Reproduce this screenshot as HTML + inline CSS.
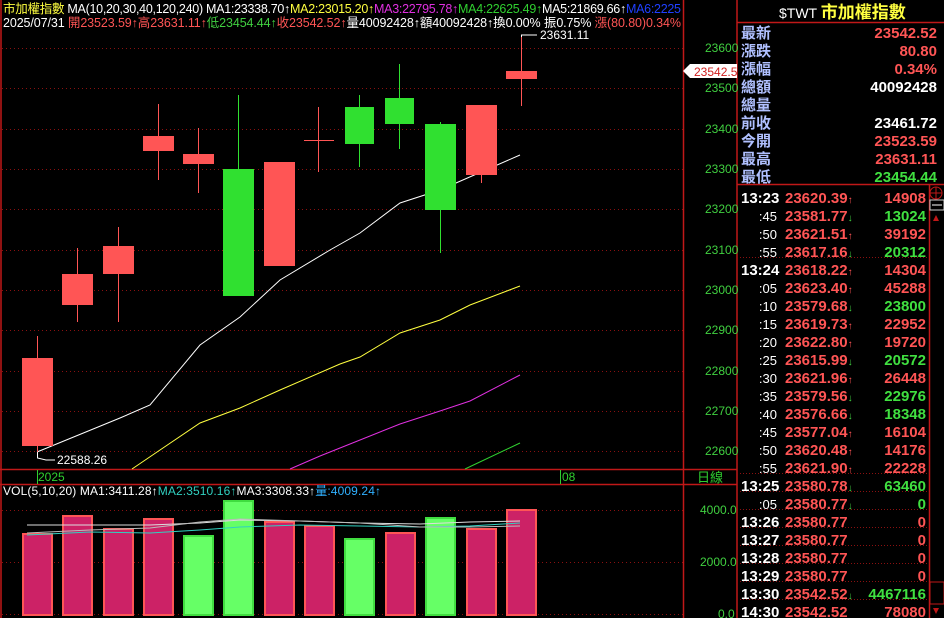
<!DOCTYPE html>
<html><head><meta charset="utf-8"><style>
html,body{margin:0;padding:0;background:#000;width:944px;height:618px;overflow:hidden}
svg{display:block;font-family:"Liberation Sans","Noto Sans CJK TC",sans-serif}
</style></head><body>
<svg width="944" height="618" xmlns="http://www.w3.org/2000/svg" font-size="12">
<rect width="944" height="618" fill="#000"/>
<g stroke="#8a1010" stroke-dasharray="1,3" stroke-width="1">
<line x1="2" x2="683" y1="48.5" y2="48.5"/><line x1="2" x2="683" y1="88.5" y2="88.5"/>
<line x1="2" x2="683" y1="129.5" y2="129.5"/><line x1="2" x2="683" y1="169.5" y2="169.5"/>
<line x1="2" x2="683" y1="209.5" y2="209.5"/><line x1="2" x2="683" y1="250.5" y2="250.5"/>
<line x1="2" x2="683" y1="290.5" y2="290.5"/><line x1="2" x2="683" y1="330.5" y2="330.5"/>
<line x1="2" x2="683" y1="371.5" y2="371.5"/><line x1="2" x2="683" y1="411.5" y2="411.5"/>
<line x1="2" x2="683" y1="451.5" y2="451.5"/>
<line x1="2" x2="683" y1="510.5" y2="510.5"/><line x1="2" x2="683" y1="562.5" y2="562.5"/>
<line x1="2" x2="683" y1="614.5" y2="614.5"/>
</g>
<g stroke="#c01818" stroke-width="1.5" fill="none">
<line x1="1" y1="0" x2="1" y2="618"/>
<line x1="0" y1="469.5" x2="737" y2="469.5"/>
<line x1="0" y1="484.5" x2="737" y2="484.5"/>
<line x1="683.5" y1="0" x2="683.5" y2="618"/>
<line x1="737" y1="0" x2="737" y2="618"/>
<line x1="737" y1="22.5" x2="944" y2="22.5"/>
<line x1="737" y1="184.5" x2="944" y2="184.5"/>
<line x1="929.5" y1="185" x2="929.5" y2="618"/>
</g>
<polyline fill="none" stroke="#fff" stroke-width="1" points="37,452 120,418 150,405 200,345 240,317 280,280 330,250 360,233 400,203 440,190 520,155"/>
<polyline fill="none" stroke="#ffff40" stroke-width="1" points="132,469 160,450 200,423 240,408 280,390 340,364 360,357 400,333 440,320 470,305 520,286"/>
<polyline fill="none" stroke="#e030e0" stroke-width="1" points="290,469 320,456 360,440 400,424 440,411 470,401 520,375"/>
<polyline fill="none" stroke="#30d030" stroke-width="1" points="465,469 520,443"/>
<g fill="#ff5555" stroke="#ff5555">
<line x1="37.5" y1="336" x2="37.5" y2="458"/><rect x="22" y="358" width="31" height="88" stroke="none"/>
<line x1="77.5" y1="248" x2="77.5" y2="322"/><rect x="62" y="274" width="31" height="31" stroke="none"/>
<line x1="118.5" y1="227" x2="118.5" y2="322"/><rect x="103" y="246" width="31" height="28" stroke="none"/>
<line x1="158.5" y1="104" x2="158.5" y2="180"/><rect x="143" y="136" width="31" height="15" stroke="none"/>
<line x1="198.5" y1="128" x2="198.5" y2="193"/><rect x="183" y="154" width="31" height="10" stroke="none"/>
<rect x="264" y="162" width="31" height="104" stroke="none"/>
<line x1="318.5" y1="107" x2="318.5" y2="172"/><line x1="304" y1="140.5" x2="334" y2="140.5"/>
<line x1="481.5" y1="105" x2="481.5" y2="183"/><rect x="466" y="105" width="31" height="70" stroke="none"/>
<line x1="521.5" y1="37" x2="521.5" y2="106"/><rect x="506" y="71" width="31" height="8" stroke="none"/>
</g>
<g fill="#30e030" stroke="#30e030">
<line x1="238.5" y1="95" x2="238.5" y2="296"/><rect x="223" y="169" width="31" height="127" stroke="none"/>
<line x1="359.5" y1="95" x2="359.5" y2="167"/><rect x="345" y="107" width="29" height="37" stroke="none"/>
<line x1="399.5" y1="64" x2="399.5" y2="149"/><rect x="385" y="98" width="29" height="26" stroke="none"/>
<line x1="440.5" y1="122" x2="440.5" y2="253"/><rect x="425" y="124" width="31" height="86" stroke="none"/>
</g>
<polyline fill="none" stroke="#fff" points="521.5,37 521.5,35 537,35"/>
<text x="540" y="39" fill="#fff">23631.11</text>
<polyline fill="none" stroke="#fff" points="37.5,452 37.5,458 46,460 55,460"/>
<text x="57" y="464" fill="#fff">22588.26</text>
<text x="38" y="481" fill="#30d030">2025</text>
<line x1="37.5" y1="470" x2="37.5" y2="484" stroke="#30d030"/>
<text x="562" y="481" fill="#30d030">08</text>
<line x1="560.5" y1="470" x2="560.5" y2="484" stroke="#30d030"/>
<text x="697" y="482" fill="#30d030" font-size="13">日線</text>
<g fill="#cc2266" stroke="#ff5555" stroke-width="2">
<rect x="23" y="534" width="29" height="81"/><rect x="63" y="516" width="29" height="99"/>
<rect x="104" y="529" width="29" height="86"/><rect x="144" y="519" width="29" height="96"/>
<rect x="265" y="522" width="29" height="93"/><rect x="305" y="526" width="29" height="89"/>
<rect x="386" y="533" width="29" height="82"/><rect x="467" y="529" width="29" height="86"/>
<rect x="507" y="510" width="29" height="105"/>
</g>
<g fill="#66ff66" stroke="#40dd40" stroke-width="2">
<rect x="184" y="536" width="29" height="79"/><rect x="224" y="501" width="29" height="114"/>
<rect x="345" y="539" width="29" height="76"/><rect x="426" y="518" width="29" height="97"/>
</g>
<polyline fill="none" stroke="#ddd" points="27,525 150,525 200,523 240,520 300,521 360,523 420,524 470,522 520,521"/>
<polyline fill="none" stroke="#30d0c0" points="27,535 90,532 150,533 200,530 240,527 300,525 360,526 420,527 470,526 520,523"/>
<polyline fill="none" stroke="#bbb" points="27,533 90,530 150,528 200,522 240,519 300,521 360,523 420,527 470,527 520,526"/>
<g fill="#40d040" font-size="12">
<text x="705" y="52">23600</text><text x="705" y="92">23500</text>
<text x="705" y="133">23400</text><text x="705" y="173">23300</text>
<text x="705" y="213">23200</text><text x="705" y="254">23100</text>
<text x="705" y="294">23000</text><text x="705" y="334">22900</text>
<text x="705" y="375">22800</text><text x="705" y="415">22700</text>
<text x="705" y="455">22600</text>
<text x="700" y="514">4000.0</text><text x="700" y="566">2000.0</text><text x="718" y="618">0.0</text>
</g>
<polygon points="683,71 690,64 737,64 737,78 690,78" fill="#fff"/>
<text x="694" y="76" fill="#d02020">23542.5</text>
<text x="3" y="13" font-size="12.5" fill="#fff" textLength="678" lengthAdjust="spacing"><tspan fill="#ffff40">市加權指數</tspan> MA(10,20,30,40,120,240) MA1:23338.70↑<tspan fill="#ffff40">MA2:23015.20↑</tspan><tspan fill="#e030e0">MA3:22795.78↑</tspan><tspan fill="#30d030">MA4:22625.49↑</tspan>MA5:21869.66↑<tspan fill="#2040ff">MA6:2225</tspan></text>
<text x="3" y="27" font-size="12.5" fill="#fff" textLength="678" lengthAdjust="spacing">2025/07/31 <tspan fill="#ff5555">開23523.59↑高23631.11↑</tspan><tspan fill="#40d040">低23454.44↑</tspan><tspan fill="#ff5555">收23542.52↑</tspan>量40092428↑額40092428↑換0.00% 振0.75% <tspan fill="#ff5555">漲(80.80)0.34%</tspan></text>
<text x="3" y="495" fill="#fff" font-size="12" textLength="378" lengthAdjust="spacing">VOL(5,10,20) MA1:3411.28↑<tspan fill="#30d0c0">MA2:3510.16↑</tspan>MA3:3308.33↑<tspan fill="#30b0ff">量:4009.24↑</tspan></text>
<text x="779" y="18" fill="#fff" font-size="14">$TWT <tspan fill="#ffff40" font-size="17" font-weight="bold">市加權指數</tspan></text>
<g font-size="15" fill="#b0c0ff" font-weight="bold">
<text x="741" y="38">最新</text><text x="741" y="56">漲跌</text><text x="741" y="74">漲幅</text>
<text x="741" y="92">總額</text><text x="741" y="110">總量</text><text x="741" y="128">前收</text>
<text x="741" y="146">今開</text><text x="741" y="164">最高</text><text x="741" y="182">最低</text>
</g>
<g font-size="15" font-weight="bold" text-anchor="end">
<text x="937" y="38" fill="#ff5555">23542.52</text><text x="937" y="56" fill="#ff5555">80.80</text>
<text x="937" y="74" fill="#ff5555">0.34%</text><text x="937" y="92" fill="#fff">40092428</text>
<text x="937" y="128" fill="#fff">23461.72</text><text x="937" y="146" fill="#ff5555">23523.59</text>
<text x="937" y="164" fill="#ff5555">23631.11</text><text x="937" y="182" fill="#40e040">23454.44</text>
</g>
<g stroke="#8a1010" stroke-dasharray="1,2">
<line x1="740" x2="928" y1="257.5" y2="257.5"/><line x1="740" x2="928" y1="473.5" y2="473.5"/>
<line x1="740" x2="928" y1="491.5" y2="491.5"/><line x1="740" x2="928" y1="509.5" y2="509.5"/>
<line x1="740" x2="928" y1="527.5" y2="527.5"/><line x1="740" x2="928" y1="545.5" y2="545.5"/>
<line x1="740" x2="928" y1="563.5" y2="563.5"/><line x1="740" x2="928" y1="581.5" y2="581.5"/>
<line x1="740" x2="928" y1="599.5" y2="599.5"/>
</g>
<g font-size="15" font-weight="bold">
<g fill="#fff">
<text x="741" y="203">13:23</text><text x="741" y="275">13:24</text><text x="741" y="491">13:25</text>
<text x="741" y="527">13:26</text><text x="741" y="545">13:27</text><text x="741" y="563">13:28</text>
<text x="741" y="581">13:29</text><text x="741" y="599">13:30</text><text x="741" y="617">14:30</text>
</g>
<g fill="#fff" font-weight="normal" font-size="13" text-anchor="end">
<text x="777" y="221">:45</text><text x="777" y="239">:50</text><text x="777" y="257">:55</text>
<text x="777" y="293">:05</text><text x="777" y="311">:10</text><text x="777" y="329">:15</text>
<text x="777" y="347">:20</text><text x="777" y="365">:25</text><text x="777" y="383">:30</text>
<text x="777" y="401">:35</text><text x="777" y="419">:40</text><text x="777" y="437">:45</text>
<text x="777" y="455">:50</text><text x="777" y="473">:55</text><text x="777" y="509">:05</text>
</g>
<g fill="#ff5555">
<text x="785" y="203">23620.39<tspan font-size="10">↑</tspan></text><text x="785" y="221">23581.77<tspan fill="#40d040" font-size="10">↓</tspan></text>
<text x="785" y="239">23621.51<tspan font-size="10">↑</tspan></text><text x="785" y="257">23617.16<tspan fill="#40d040" font-size="10">↓</tspan></text>
<text x="785" y="275">23618.22<tspan font-size="10">↑</tspan></text><text x="785" y="293">23623.40<tspan font-size="10">↑</tspan></text>
<text x="785" y="311">23579.68<tspan fill="#40d040" font-size="10">↓</tspan></text><text x="785" y="329">23619.73<tspan font-size="10">↑</tspan></text>
<text x="785" y="347">23622.80<tspan font-size="10">↑</tspan></text><text x="785" y="365">23615.99<tspan fill="#40d040" font-size="10">↓</tspan></text>
<text x="785" y="383">23621.96<tspan font-size="10">↑</tspan></text><text x="785" y="401">23579.56<tspan fill="#40d040" font-size="10">↓</tspan></text>
<text x="785" y="419">23576.66<tspan fill="#40d040" font-size="10">↓</tspan></text><text x="785" y="437">23577.04<tspan font-size="10">↑</tspan></text>
<text x="785" y="455">23620.48<tspan font-size="10">↑</tspan></text><text x="785" y="473">23621.90<tspan font-size="10">↑</tspan></text>
<text x="785" y="491">23580.78<tspan fill="#40d040" font-size="10">↓</tspan></text><text x="785" y="509">23580.77<tspan fill="#40d040" font-size="10">↓</tspan></text>
<text x="785" y="527">23580.77</text><text x="785" y="545">23580.77</text><text x="785" y="563">23580.77</text>
<text x="785" y="581">23580.77</text><text x="785" y="599">23542.52<tspan fill="#40d040" font-size="10">↓</tspan></text>
<text x="785" y="617">23542.52</text>
</g>
<g text-anchor="end">
<text x="926" y="203" fill="#ff5555">14908</text><text x="926" y="221" fill="#40e040">13024</text>
<text x="926" y="239" fill="#ff5555">39192</text><text x="926" y="257" fill="#40e040">20312</text>
<text x="926" y="275" fill="#ff5555">14304</text><text x="926" y="293" fill="#ff5555">45288</text>
<text x="926" y="311" fill="#40e040">23800</text><text x="926" y="329" fill="#ff5555">22952</text>
<text x="926" y="347" fill="#ff5555">19720</text><text x="926" y="365" fill="#40e040">20572</text>
<text x="926" y="383" fill="#ff5555">26448</text><text x="926" y="401" fill="#40e040">22976</text>
<text x="926" y="419" fill="#40e040">18348</text><text x="926" y="437" fill="#ff5555">16104</text>
<text x="926" y="455" fill="#ff5555">14176</text><text x="926" y="473" fill="#ff5555">22228</text>
<text x="926" y="491" fill="#40e040">63460</text><text x="926" y="509" fill="#40e040">0</text>
<text x="926" y="527" fill="#ff5555">0</text><text x="926" y="545" fill="#ff5555">0</text>
<text x="926" y="563" fill="#ff5555">0</text><text x="926" y="581" fill="#ff5555">0</text>
<text x="926" y="599" fill="#40e040">4467116</text><text x="926" y="617" fill="#ff5555">78080</text>
</g>
</g>
<circle cx="936" cy="193" r="6" fill="none" stroke="#c01818"/>
<line x1="930" y1="193" x2="942" y2="193" stroke="#c01818"/><line x1="936" y1="187" x2="936" y2="199" stroke="#c01818"/>
<rect x="930" y="200" width="14" height="10" fill="none" stroke="#ccc"/>
<line x1="932" y1="205" x2="942" y2="205" stroke="#fff"/>
<polygon points="933,221 936,215 939,221" fill="#c01818"/>
<rect x="930" y="582" width="14" height="22" fill="none" stroke="#c01818"/>
<polygon points="933,608 939,608 936,614" fill="#c01818"/>
</svg>
</body></html>
